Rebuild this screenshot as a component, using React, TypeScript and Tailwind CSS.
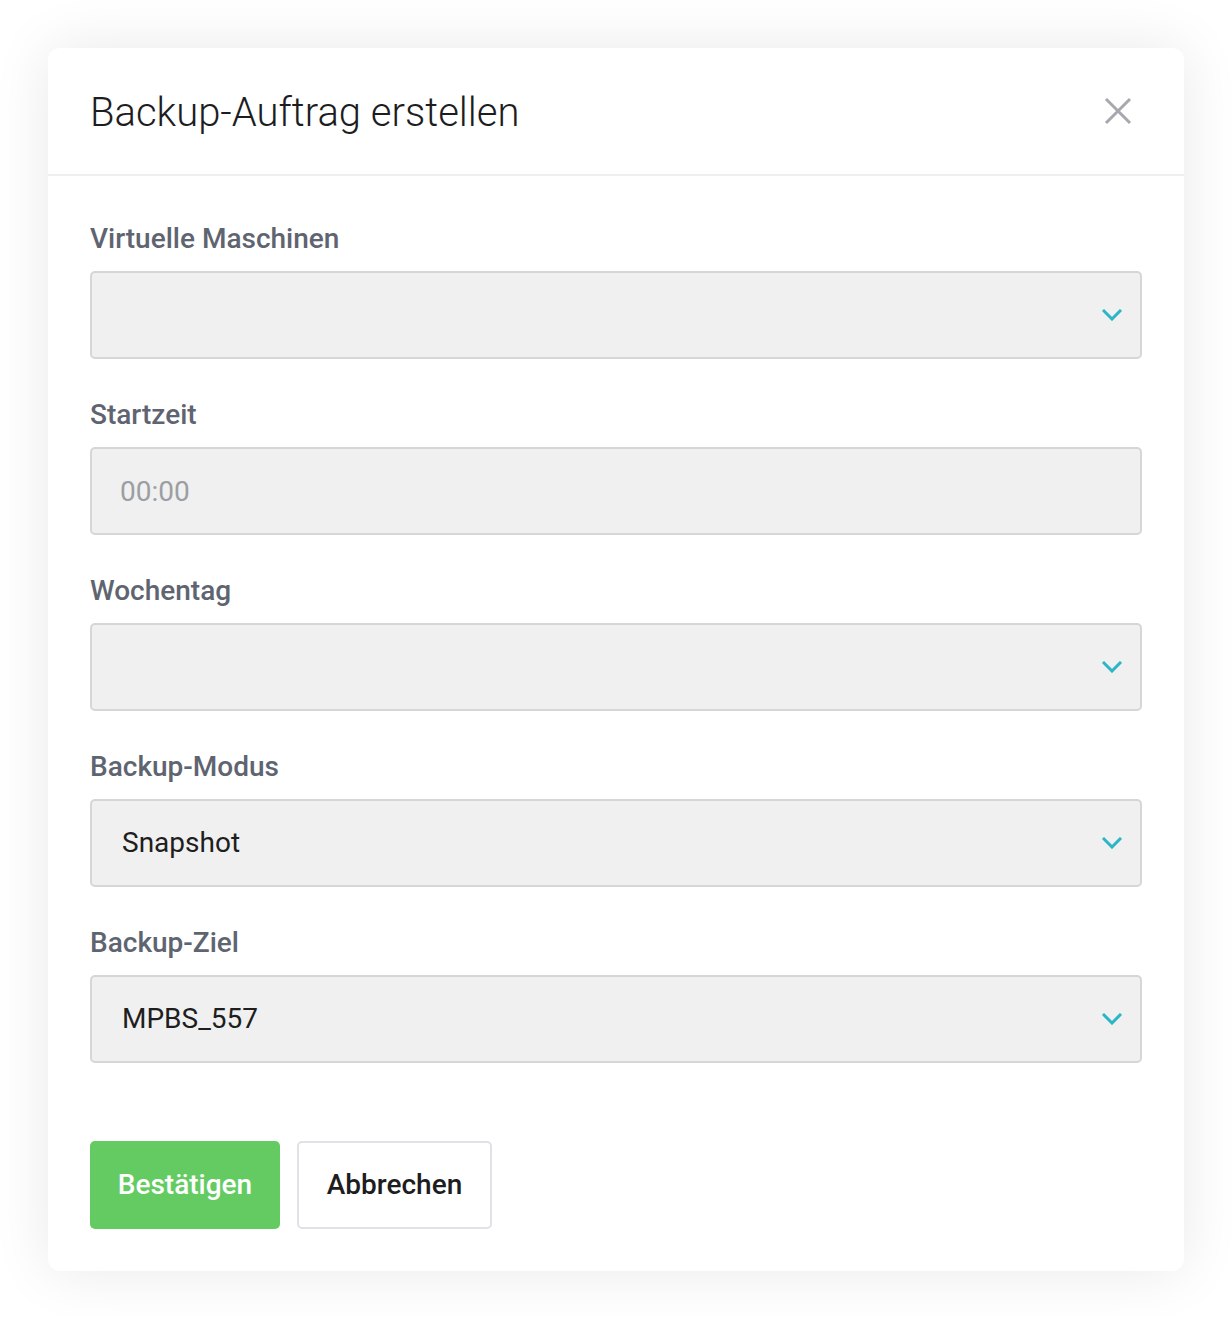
import { useState } from "react";

function Chevron() {
  return (
    <svg width="20" height="12" viewBox="0 0 20 12" fill="none" className="shrink-0">
      <path d="M2 2l8 8 8-8" stroke="#2bb5c9" strokeWidth="3" strokeLinecap="square" />
    </svg>
  );
}

function Field({ label, children }: { label: string; children: React.ReactNode }) {
  return (
    <div className="mb-10">
      <div className="mb-4 text-[28px] leading-8 font-medium text-[#5e6470]">{label}</div>
      {children}
    </div>
  );
}

function SelectBox({ value }: { value?: string }) {
  return (
    <div className="flex h-[88px] items-center justify-between rounded-[5px] border-2 border-[#d6d6d6] bg-[#f0f0f0] pl-[30px] pr-[18px]">
      <span className="text-[28px] text-[#1e1e20]">{value}</span>
      <Chevron />
    </div>
  );
}

export default function App() {
  const [time, setTime] = useState("");

  return (
    <div className="min-h-[1318px] bg-white pt-12 px-12 font-['Roboto',sans-serif]">
      <div className="w-[1136px] rounded-xl bg-white shadow-[0_0_60px_rgba(0,0,0,0.09)]">
        <div className="flex h-32 items-center justify-between border-b-2 border-[#efefef] pl-[42px] pr-[52px]">
          <h1 className="text-[40px] font-light text-[#1d1d1f] pt-1">Backup-Auftrag erstellen</h1>
          <svg width="28" height="28" viewBox="0 0 28 28" fill="none">
            <path d="M2 2l24 24M26 2L2 26" stroke="#a7a7ad" strokeWidth="3" />
          </svg>
        </div>

        <div className="px-[42px] pt-[47px] pb-[42px]">
          <Field label="Virtuelle Maschinen">
            <SelectBox />
          </Field>
          <Field label="Startzeit">
            <input
              value={time}
              onChange={(e) => setTime(e.target.value)}
              placeholder="00:00"
              className="block h-[88px] w-full rounded-[5px] border-2 border-[#d6d6d6] bg-[#f0f0f0] px-7 text-[28px] text-[#1e1e20] outline-none placeholder:text-[#9b9ea3]"
            />
          </Field>
          <Field label="Wochentag">
            <SelectBox />
          </Field>
          <Field label="Backup-Modus">
            <SelectBox value="Snapshot" />
          </Field>
          <Field label="Backup-Ziel">
            <SelectBox value="MPBS_557" />
          </Field>

          <div className="mt-[78px] flex gap-[17px]">
            <button className="h-[88px] w-[190px] rounded-[5px] bg-[#64cb62] text-[28px] font-medium text-white">
              Bestätigen
            </button>
            <button className="h-[88px] w-[195px] rounded-[5px] border-2 border-[#e1e1e6] bg-white text-[28px] font-medium text-[#1d1d1f]">
              Abbrechen
            </button>
          </div>
        </div>
      </div>
    </div>
  );
}
